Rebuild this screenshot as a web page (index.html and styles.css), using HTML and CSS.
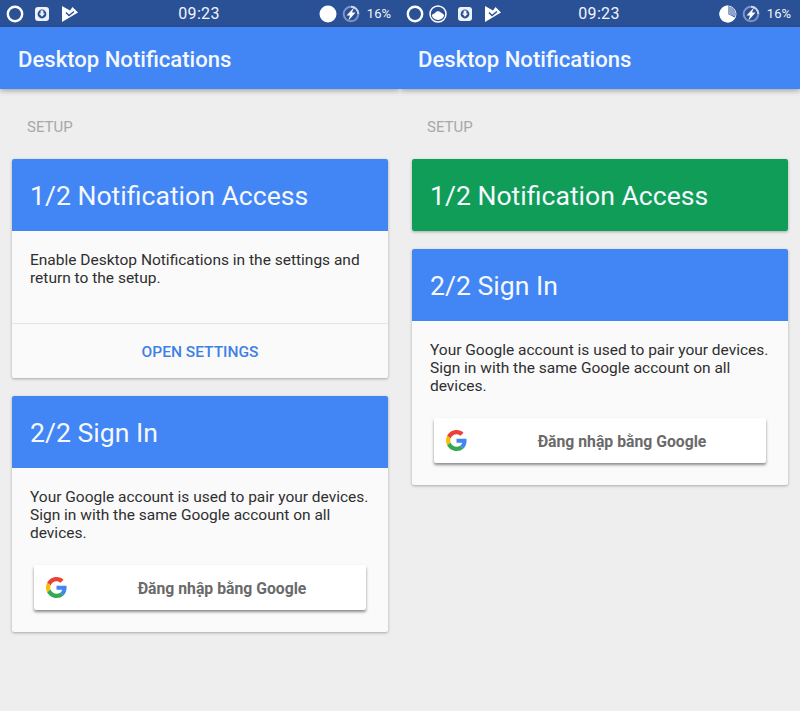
FILE: index.html
```html
<!DOCTYPE html>
<html lang="en">
<head>
    <meta charset="UTF-8">
    <meta name="viewport" content="width=device-width, initial-scale=1.0">
    <title>Desktop Notifications</title>
    <link rel="stylesheet" href="styles.css">
</head>
<body>

<div class="screens">

    <!-- Left screen -->
    <div class="phone">
        <div class="status-bar">
            <div class="status-left">
                <svg class="icon" width="18" height="18" viewBox="0 0 18 18"><circle cx="9" cy="9" r="7.2" fill="none" stroke="#fff" stroke-width="2.4"/></svg>
                <svg class="icon icon-save" width="14" height="14" viewBox="0 0 14 14"><rect width="14" height="14" rx="3" fill="#eef2fa"/><circle cx="7" cy="7" r="4.4" fill="#2a4f94"/><path d="M5.6 3.6h2.8v3h1.6L7 9.8 4 6.6h1.600z" fill="#eef2fa"/></svg>
                <svg class="icon icon-check" width="16" height="16" viewBox="0 0 16 16"><path d="M0 0L8 4.500 10.500 1 16 6.500 0 16z" fill="#fff"/><path d="M4 6.500L7 9.500 12 5.500" fill="none" stroke="#2a4f94" stroke-width="1.400"/></svg>
            </div>
            <span class="clock">09:23</span>
            <div class="status-right">
                <svg class="icon" width="18" height="18" viewBox="0 0 18 18"><circle cx="9" cy="9" r="8.500" fill="#fff"/></svg>
                <svg class="icon" width="18" height="18" viewBox="0 0 18 18"><circle cx="9" cy="9" r="7.300" fill="none" stroke="#7e97c4" stroke-width="2"/><path d="M9 1.700A7.300 7.300 0 0 1 16.300 9" fill="none" stroke="#c9d5ea" stroke-width="2"/><path d="M12 2.500L4.500 10.500H8L6.500 15.500 13.500 7.500H10z" fill="#fff"/></svg>
                <span class="battery">16%</span>
            </div>
        </div>
        <div class="app-bar">Desktop Notifications</div>
        <div class="content">
            <div class="section-label">SETUP</div>
            <div class="card">
                <div class="card-header">1/2 Notification Access</div>
                <div class="card-body card-body-access">Enable Desktop Notifications in the settings and return to the setup.</div>
                <div class="card-action">OPEN SETTINGS</div>
            </div>
            <div class="card">
                <div class="card-header">2/2 Sign In</div>
                <div class="card-body">Your Google account is used to pair your devices. Sign in with the same Google account on all devices.</div>
                <div class="signin-wrap">
                    <div class="signin-btn">
                        <svg class="g-logo" width="21" height="21" viewBox="0 0 48 48"><path fill="#ea4335" d="M24 9.500c3.500 0 6.700 1.200 9.200 3.600l6.900-6.900C35.900 2.400 30.500 0 24 0 14.600 0 6.500 5.400 2.600 13.200l8 6.200C12.500 13.600 17.800 9.500 24 9.500z"/><path fill="#4285f4" d="M47 24.500c0-1.600-.1-3.100-.4-4.500H24v9h12.900c-.6 3-2.300 5.500-4.800 7.200l7.700 6C44.300 38 47 31.800 47 24.500z"/><path fill="#fbbc05" d="M10.500 28.600c-.5-1.500-.8-3-.8-4.600s.3-3.100.8-4.600l-8-6.200C.9 16.500 0 20.100 0 24s.9 7.500 2.600 10.800l7.900-6.200z"/><path fill="#34a853" d="M24 48c6.500 0 11.900-2.100 15.900-5.800l-7.700-6c-2.200 1.500-4.900 2.300-8.200 2.300-6.200 0-11.500-4.100-13.400-9.900l-8 6.200C6.500 42.600 14.600 48 24 48z"/></svg>
                        <span class="signin-text">Đăng nhập bằng Google</span>
                    </div>
                </div>
            </div>
        </div>
    </div>

    <!-- Right screen -->
    <div class="phone">
        <div class="status-bar">
            <div class="status-left">
                <svg class="icon" width="18" height="18" viewBox="0 0 18 18"><circle cx="9" cy="9" r="7.200" fill="none" stroke="#fff" stroke-width="2.400"/></svg>
                <svg class="icon icon-cloud" width="18" height="18" viewBox="0 0 18 18"><circle cx="9" cy="9" r="8" fill="none" stroke="#fff" stroke-width="1.500"/><path d="M2.800 10C4.300 8.800 5.500 9 6.500 7.500c1-1.500 3.500-1.800 5-.3 1.300.6 2.600 1.600 3.700 2.800-.5 2.800-3 4.900-6.200 4.900S3.300 12.800 2.800 10z" fill="#fff"/></svg>
                <svg class="icon icon-save-wide" width="14" height="14" viewBox="0 0 14 14"><rect width="14" height="14" rx="3" fill="#eef2fa"/><circle cx="7" cy="7" r="4.400" fill="#2a4f94"/><path d="M5.600 3.600h2.800v3h1.600L7 9.800 4 6.600h1.600z" fill="#eef2fa"/></svg>
                <svg class="icon icon-check-wide" width="16" height="16" viewBox="0 0 16 16"><path d="M0 0L8 4.500 10.500 1 16 6.500 0 16z" fill="#fff"/><path d="M4 6.500L7 9.500 12 5.500" fill="none" stroke="#2a4f94" stroke-width="1.400"/></svg>
            </div>
            <span class="clock">09:23</span>
            <div class="status-right">
                <svg class="icon" width="18" height="18" viewBox="0 0 18 18"><circle cx="9" cy="9" r="8" fill="none" stroke="#dfe6f3" stroke-width="1"/><path d="M9 .5V9l7.400 3.800A8.500 8.500 0 1 1 9 .5z" fill="#fff"/><path d="M9 1.500A7.500 7.500 0 0 1 16 11.500L9 9z" fill="#8ea6cf"/></svg>
                <svg class="icon" width="18" height="18" viewBox="0 0 18 18"><circle cx="9" cy="9" r="7.300" fill="none" stroke="#7e97c4" stroke-width="2"/><path d="M9 1.700A7.300 7.300 0 0 1 16.300 9" fill="none" stroke="#c9d5ea" stroke-width="2"/><path d="M12 2.500L4.500 10.500H8L6.500 15.500 13.500 7.500H10z" fill="#fff"/></svg>
                <span class="battery">16%</span>
            </div>
        </div>
        <div class="app-bar">Desktop Notifications</div>
        <div class="content">
            <div class="section-label">SETUP</div>
            <div class="card">
                <div class="card-header card-header-done">1/2 Notification Access</div>
            </div>
            <div class="card">
                <div class="card-header">2/2 Sign In</div>
                <div class="card-body">Your Google account is used to pair your devices. Sign in with the same Google account on all devices.</div>
                <div class="signin-wrap">
                    <div class="signin-btn">
                        <svg class="g-logo" width="21" height="21" viewBox="0 0 48 48"><path fill="#ea4335" d="M24 9.500c3.500 0 6.700 1.200 9.200 3.600l6.900-6.900C35.900 2.400 30.500 0 24 0 14.600 0 6.500 5.400 2.600 13.200l8 6.200C12.500 13.600 17.800 9.500 24 9.500z"/><path fill="#4285f4" d="M47 24.500c0-1.600-.1-3.100-.4-4.500H24v9h12.900c-.6 3-2.300 5.500-4.800 7.200l7.700 6C44.300 38 47 31.800 47 24.500z"/><path fill="#fbbc05" d="M10.500 28.600c-.5-1.500-.8-3-.8-4.600s.3-3.100.8-4.600l-8-6.200C.9 16.500 0 20.100 0 24s.9 7.500 2.600 10.800l7.900-6.200z"/><path fill="#34a853" d="M24 48c6.500 0 11.900-2.100 15.900-5.800l-7.700-6c-2.200 1.500-4.900 2.300-8.200 2.300-6.200 0-11.500-4.100-13.400-9.900l-8 6.200C6.500 42.600 14.600 48 24 48z"/></svg>
                        <span class="signin-text">Đăng nhập bằng Google</span>
                    </div>
                </div>
            </div>
        </div>
    </div>

</div>

</body>
</html>
```

FILE: styles.css
```css
body {
    font-family: Roboto, Arial, sans-serif;
    background-color: #eeeeee;
    margin: 0;
    height: 711px;
    overflow: hidden;
}

.screens {
    display: flex;
}

.phone {
    width: 400px;
    height: 711px;
    overflow: hidden;
}

/* Status bar */
.status-bar {
    display: grid;
    grid-template-columns: 1fr auto 1fr;
    align-items: center;
    height: 27px;
    padding: 0 9px 0 6px;
    background-color: #2a5096;
    color: #f2f5fb;
}

.status-left {
    display: flex;
    align-items: center;
}

.status-right {
    display: flex;
    align-items: center;
    justify-content: flex-end;
    gap: 5px;
}

.icon {
    display: block;
    flex: none;
}

.icon-save {
    margin-left: 11px;
}

.icon-check {
    margin-left: 13px;
}

.icon-cloud {
    margin-left: 5px;
}

.icon-save-wide {
    margin-left: 11px;
}

.icon-check-wide {
    margin-left: 13px;
}

.clock {
    padding-left: 1px;
    font-size: 16px;
    letter-spacing: 0.3px;
}

.battery {
    font-size: 13px;
    margin-left: 2px;
}

/* App bar */
.app-bar {
    position: relative;
    display: flex;
    align-items: center;
    box-sizing: border-box;
    height: 62px;
    padding: 2px 0 0 18px;
    background-color: #4285f4;
    color: #f5f8fe;
    font-size: 22.1px;
    font-weight: 500;
    box-shadow: 0px 2px 5px rgba(0, 0, 0, 0.3);
}

.content {
    padding: 0 12px;
}

.section-label {
    height: 70px;
    padding: 30px 0 0 15px;
    box-sizing: border-box;
    color: #a8a8a8;
    font-size: 15px;
    line-height: 16px;
}

/* Cards */
.card {
    margin-bottom: 18px;
    background-color: #fafafa;
    border-radius: 2px;
    overflow: hidden;
    box-shadow: 0px 1px 3px rgba(0, 0, 0, 0.3);
}

.card-header {
    display: flex;
    align-items: center;
    box-sizing: border-box;
    height: 72px;
    padding: 1px 0 0 18px;
    background-color: #4285f4;
    color: #f5f8fe;
    font-size: 26.6px;
}

.card-header-done {
    background-color: #0f9d58;
}

.card-body {
    padding: 19.8px 18px 0;
    color: #2f2f2f;
    font-size: 15.5px;
    line-height: 18.3px;
}

.card-body-access {
    height: 92px;
    box-sizing: border-box;
}

.card-action {
    display: flex;
    align-items: center;
    justify-content: center;
    height: 55px;
    padding-top: 2px;
    border-top: 1px solid #e4e4e4;
    box-sizing: border-box;
    color: #3f80e6;
    font-size: 15.5px;
    font-weight: 500;
}

/* Sign in button */
.signin-wrap {
    padding: 22.3px 22px 22px;
}

.signin-btn {
    display: flex;
    align-items: center;
    height: 45px;
    padding-left: 12px;
    background-color: #ffffff;
    border-radius: 2px;
    box-shadow: 0px 2px 3px rgba(0, 0, 0, 0.45);
}

.g-logo {
    display: block;
    flex: none;
}

.signin-text {
    flex: 1;
    margin-left: 11px;
    padding-top: 2px;
    color: #6a6a6a;
    font-size: 15.75px;
    font-weight: 700;
    text-align: center;
}
```
